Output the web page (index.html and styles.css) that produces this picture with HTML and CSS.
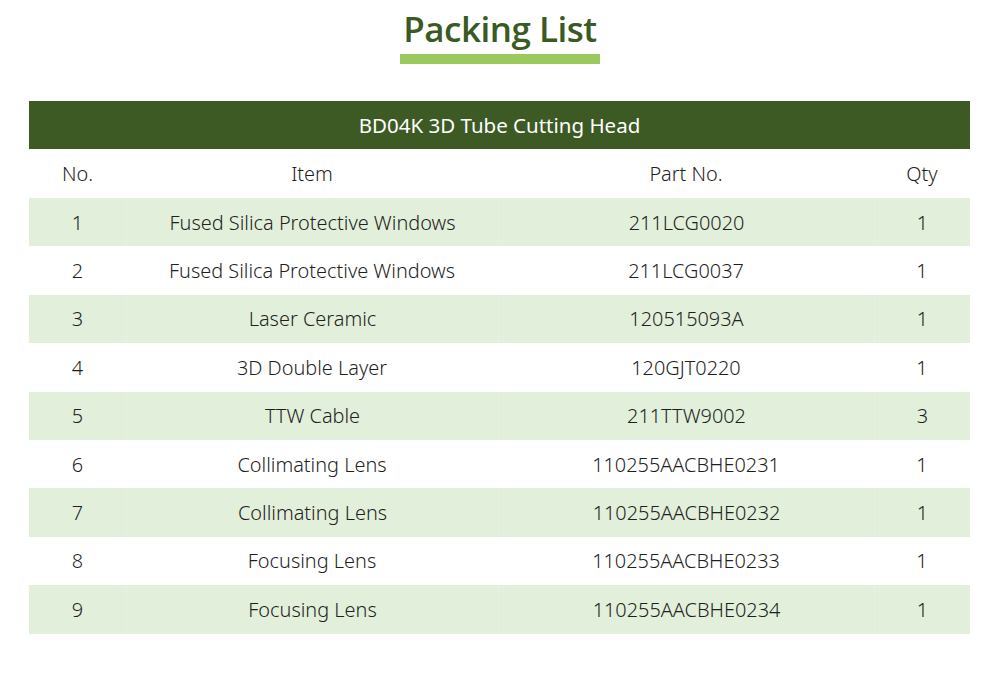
FILE: index.html
```html
<!DOCTYPE html>
<html>
<head>
<meta charset="utf-8">
<link rel="stylesheet" href="styles.css">
</head>
<body>
<div class="page">
  <div class="title-wrap">
    <h1 class="title">Packing List</h1>
    <div class="title-bar"></div>
  </div>
  <div class="table">
    <div class="caption">BD04K 3D Tube Cutting Head</div>
    <div class="row head"><div class="c">No.</div><div class="c">Item</div><div class="c">Part No.</div><div class="c">Qty</div></div>
    <div class="row alt"><div class="c">1</div><div class="c">Fused Silica Protective Windows</div><div class="c">211LCG0020</div><div class="c">1</div></div>
    <div class="row"><div class="c">2</div><div class="c">Fused Silica Protective Windows</div><div class="c">211LCG0037</div><div class="c">1</div></div>
    <div class="row alt"><div class="c">3</div><div class="c">Laser Ceramic</div><div class="c">120515093A</div><div class="c">1</div></div>
    <div class="row"><div class="c">4</div><div class="c">3D Double Layer</div><div class="c">120GJT0220</div><div class="c">1</div></div>
    <div class="row alt"><div class="c">5</div><div class="c">TTW Cable</div><div class="c">211TTW9002</div><div class="c">3</div></div>
    <div class="row"><div class="c">6</div><div class="c">Collimating Lens</div><div class="c">110255AACBHE0231</div><div class="c">1</div></div>
    <div class="row alt"><div class="c">7</div><div class="c">Collimating Lens</div><div class="c">110255AACBHE0232</div><div class="c">1</div></div>
    <div class="row"><div class="c">8</div><div class="c">Focusing Lens</div><div class="c">110255AACBHE0233</div><div class="c">1</div></div>
    <div class="row alt"><div class="c">9</div><div class="c">Focusing Lens</div><div class="c">110255AACBHE0234</div><div class="c">1</div></div>
  </div>
</div>
</body>
</html>
```
FILE: styles.css
```css
* { box-sizing: border-box; }
html, body { margin: 0; padding: 0; background: #fff; }
body { font-family: "Noto Sans", "Open Sans", sans-serif; color: #1f1f1f; }
.page { width: 1000px; height: 682px; padding-top: 8px; }
.title-wrap { display: flex; flex-direction: column; align-items: center; }
.title {
  margin: 0;
  font-family: "Open Sans", "Noto Sans", sans-serif;
  font-weight: 600;
  font-size: 35px;
  line-height: 42px;
  color: #3a5a24;
  letter-spacing: -0.5px;
}
.title-bar { width: 200px; height: 10px; background: #9cc95d; margin-top: 4px; }
.table { margin: 37px 30px 0 29px; }
.caption {
  height: 48px;
  background: #3d5a24;
  color: #fff;
  display: flex; align-items: center; justify-content: center;
  font-size: 20.5px;
  font-weight: 400;
}
.row {
  display: grid;
  grid-template-columns: 97px 372px 376px 1fr;
  height: 48.4px;
  font-size: 19.9px;
  font-weight: 300;
}
.row.head { height: 49px; }
.row.alt { background: #e2efda; }
.row.alt .c + .c { border-left: 1px solid #e6f1df; }
.c { display: flex; align-items: center; justify-content: center; white-space: nowrap; }
```
